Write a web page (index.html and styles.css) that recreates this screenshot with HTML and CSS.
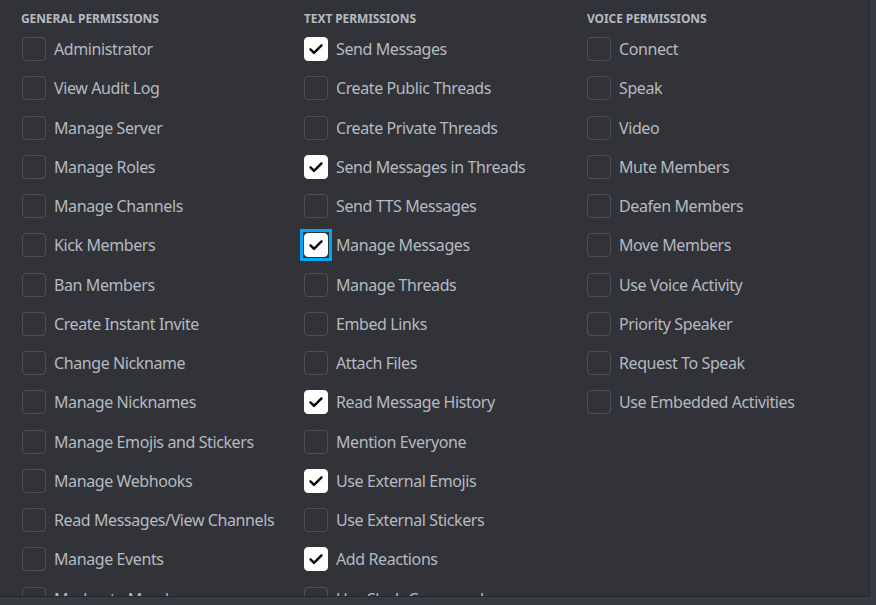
FILE: index.html
```html
<!DOCTYPE html>
<html>
<head>
<meta charset="utf-8">
<link rel="stylesheet" href="styles.css">
</head>
<body>
<div class="panel">
  <div class="columns">
    <section class="col">
      <h3 class="head head-first">General Permissions</h3>
      <ul class="list">
        <li class="row"><span class="box"></span><span class="label">Administrator</span></li>
        <li class="row"><span class="box"></span><span class="label">View Audit Log</span></li>
        <li class="row"><span class="box"></span><span class="label">Manage Server</span></li>
        <li class="row"><span class="box"></span><span class="label">Manage Roles</span></li>
        <li class="row"><span class="box"></span><span class="label">Manage Channels</span></li>
        <li class="row"><span class="box"></span><span class="label">Kick Members</span></li>
        <li class="row"><span class="box"></span><span class="label">Ban Members</span></li>
        <li class="row"><span class="box"></span><span class="label">Create Instant Invite</span></li>
        <li class="row"><span class="box"></span><span class="label">Change Nickname</span></li>
        <li class="row"><span class="box"></span><span class="label">Manage Nicknames</span></li>
        <li class="row"><span class="box"></span><span class="label">Manage Emojis and Stickers</span></li>
        <li class="row"><span class="box"></span><span class="label">Manage Webhooks</span></li>
        <li class="row"><span class="box"></span><span class="label">Read Messages/View Channels</span></li>
        <li class="row"><span class="box"></span><span class="label">Manage Events</span></li>
        <li class="row"><span class="box"></span><span class="label">Moderate Members</span></li>
      </ul>
    </section>
    <section class="col">
      <h3 class="head">Text Permissions</h3>
      <ul class="list">
        <li class="row"><span class="box checked"><svg viewBox="0 0 24 24"><path d="M6.5 12.4l3.5 3.5L17.5 8.4"/></svg></span><span class="label">Send Messages</span></li>
        <li class="row"><span class="box"></span><span class="label">Create Public Threads</span></li>
        <li class="row"><span class="box"></span><span class="label">Create Private Threads</span></li>
        <li class="row"><span class="box checked"><svg viewBox="0 0 24 24"><path d="M6.5 12.4l3.5 3.5L17.5 8.4"/></svg></span><span class="label">Send Messages in Threads</span></li>
        <li class="row"><span class="box"></span><span class="label">Send TTS Messages</span></li>
        <li class="row"><span class="box checked focused"><svg viewBox="0 0 24 24"><path d="M6.5 12.4l3.5 3.5L17.5 8.4"/></svg></span><span class="label">Manage Messages</span></li>
        <li class="row"><span class="box"></span><span class="label">Manage Threads</span></li>
        <li class="row"><span class="box"></span><span class="label">Embed Links</span></li>
        <li class="row"><span class="box"></span><span class="label">Attach Files</span></li>
        <li class="row"><span class="box checked"><svg viewBox="0 0 24 24"><path d="M6.5 12.4l3.5 3.5L17.5 8.4"/></svg></span><span class="label">Read Message History</span></li>
        <li class="row"><span class="box"></span><span class="label">Mention Everyone</span></li>
        <li class="row"><span class="box checked"><svg viewBox="0 0 24 24"><path d="M6.5 12.4l3.5 3.5L17.5 8.4"/></svg></span><span class="label">Use External Emojis</span></li>
        <li class="row"><span class="box"></span><span class="label">Use External Stickers</span></li>
        <li class="row"><span class="box checked"><svg viewBox="0 0 24 24"><path d="M6.5 12.4l3.5 3.5L17.5 8.4"/></svg></span><span class="label">Add Reactions</span></li>
        <li class="row"><span class="box"></span><span class="label">Use Slash Commands</span></li>
      </ul>
    </section>
    <section class="col">
      <h3 class="head">Voice Permissions</h3>
      <ul class="list">
        <li class="row"><span class="box"></span><span class="label">Connect</span></li>
        <li class="row"><span class="box"></span><span class="label">Speak</span></li>
        <li class="row"><span class="box"></span><span class="label">Video</span></li>
        <li class="row"><span class="box"></span><span class="label">Mute Members</span></li>
        <li class="row"><span class="box"></span><span class="label">Deafen Members</span></li>
        <li class="row"><span class="box"></span><span class="label">Move Members</span></li>
        <li class="row"><span class="box"></span><span class="label">Use Voice Activity</span></li>
        <li class="row"><span class="box"></span><span class="label">Priority Speaker</span></li>
        <li class="row"><span class="box"></span><span class="label">Request To Speak</span></li>
        <li class="row"><span class="box"></span><span class="label">Use Embedded Activities</span></li>
      </ul>
    </section>
  </div>
</div>
</body>
</html>
```
FILE: styles.css
```css
* { box-sizing: border-box; }
html, body {
  margin: 0;
  padding: 0;
  width: 876px;
  height: 605px;
  overflow: hidden;
  background: #383a41;
  font-family: "Noto Sans", "Open Sans", sans-serif;
}
.panel {
  width: 870px;
  height: 597px;
  background: #313338;
  border-right: 1px solid #26272b;
  border-bottom: 1px solid #26272b;
  overflow: hidden;
}
.columns {
  display: grid;
  grid-template-columns: 282px 283px 1fr;
  padding: 12px 0 0 22px;
}
.head {
  margin: 0;
  height: 25px;
  font-size: 12px;
  font-weight: 700;
  text-transform: uppercase;
  color: #b5bac1;
  letter-spacing: -0.1px;
  line-height: 14px;
}
.head-first {
  margin-left: -1px;
}
.list {
  list-style: none;
  margin: 0;
  padding: 0;
  display: flex;
  flex-direction: column;
  gap: 15.25px;
}
.row {
  display: flex;
  align-items: center;
  gap: 8px;
  height: 24px;
}
.box {
  position: relative;
  flex: none;
  width: 24px;
  height: 24px;
  border: 1px solid #4e5058;
  border-radius: 4px;
  display: flex;
  align-items: center;
  justify-content: center;
}
.box svg {
  width: 24px;
  height: 24px;
  flex: none;
  fill: none;
  stroke: #060607;
  stroke-width: 2.4;
  stroke-linecap: round;
  stroke-linejoin: round;
}
.box.checked {
  background: #ffffff;
  border-color: #ffffff;
}
.box.focused::before {
  content: "";
  position: absolute;
  inset: -5px;
  border: 3px solid #00a8fc;
}
.label {
  font-size: 16px;
  color: #b5bac1;
  white-space: nowrap;
  line-height: 20px;
  letter-spacing: -0.4px;
}
```
